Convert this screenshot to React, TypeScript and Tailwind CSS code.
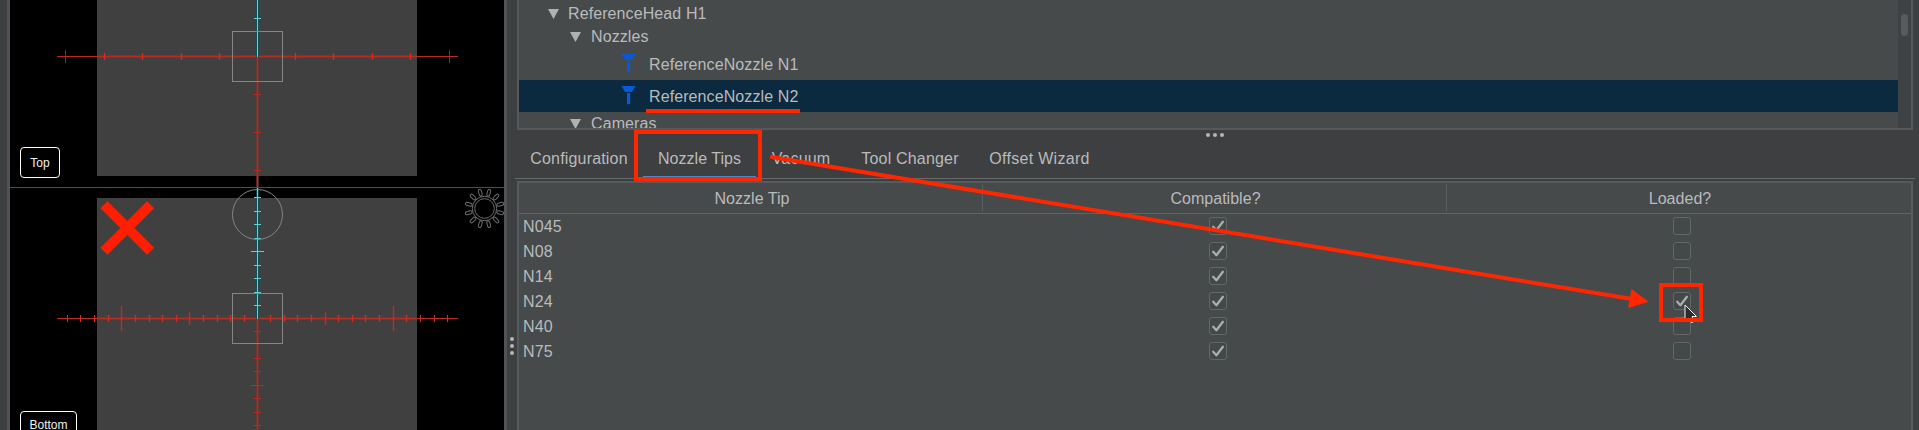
import type { ReactNode } from "react";

const RED = "#b92a20";
const BRIGHT_RED = "#de2a1c";
const CYAN = "#62cfda";

type Tick = { at: number; half: number };

const small = (positions: number[]): Tick[] => positions.map((at) => ({ at, half: 3 }));

function HorizontalAxis({ y, ticks }: { y: number; ticks: Tick[] }) {
  return (
    <g>
      <rect x={97} y={y - 1} width={320} height={3} fill="#c4271c" opacity={0.42} />
      <rect x={57} y={y} width={401} height={1} fill={RED} />
      {ticks.map((t) => (
        <g key={t.at}>
          <rect x={t.at - 1} y={y - t.half} width={3} height={t.half * 2 + 1} fill="#c4271c" opacity={t.at > 97 && t.at < 417 ? 0.2 : 0} />
          <rect x={t.at} y={y - t.half} width={1} height={t.half * 2 + 1} fill={BRIGHT_RED} opacity={t.half > 3 ? 0.75 : 1} />
        </g>
      ))}
    </g>
  );
}

function VerticalAxis({ from, to, color, glow, ticks }: { from: number; to: number; color: string; glow: string; ticks: Tick[] }) {
  return (
    <g>
      <rect x={256} y={from} width={3} height={to - from} fill={glow} opacity={0.7} />
      <rect x={257} y={from} width={1} height={to - from} fill={color} />
      {ticks.map((t) => (
        <rect key={t.at} x={257 - t.half} y={t.at} width={t.half * 2 + 1} height={1} fill={color} />
      ))}
    </g>
  );
}

function Sun() {
  return (
    <g fill="none" stroke="#6c6c6c" strokeWidth={1}>
      <circle cx={484.5} cy={208.5} r={12.2} />
      <circle cx={484.5} cy={208.5} r={9.8} />
      {Array.from({ length: 12 }, (_, i) => (
        <rect key={i} x={483} y={188.8} width={3} height={6.8} rx={1.5} transform={`rotate(${15 + i * 30} 484.5 208.5)`} />
      ))}
    </g>
  );
}

function CameraLabel({ className, children }: { className: string; children: ReactNode }) {
  return (
    <span
      className={`box-border flex shrink-0 items-center justify-center rounded-[4px] border border-white bg-black text-[12px] leading-[12px] text-[#f2f2f2] ${className}`}
    >
      {children}
    </span>
  );
}

function TopCamera() {
  return (
    <div className="relative flex h-[187px] shrink-0 items-end overflow-hidden bg-black pb-[9px] pl-[10px]">
      <svg className="absolute top-0 left-0" width={494} height={187} viewBox="10 0 494 187" shapeRendering="crispEdges">
        <rect x={97} y={0} width={320} height={176} fill="#404040" />
        <HorizontalAxis y={56} ticks={[{ at: 65, half: 6 }, ...small([104, 142, 181, 219, 295, 333, 372, 410]), { at: 449, half: 6 }]} />
        <VerticalAxis from={57} to={187} color={RED} glow="#82302a" ticks={small([94, 132, 170])} />
        <VerticalAxis from={0} to={57} color={CYAN} glow="#005a60" ticks={small([18])} />
        <rect x={232.5} y={31.5} width={50} height={50} fill="none" stroke="#858585" />
      </svg>
      <div className="relative flex">
        <CameraLabel className="h-[31px] w-[40px] pt-px">Top</CameraLabel>
      </div>
    </div>
  );
}

function BottomCamera() {
  return (
    <div className="relative flex flex-1 items-start overflow-hidden border-t border-[#4d4d4d] bg-black pt-[223px] pl-[10px]">
      <svg className="absolute top-0 left-0" width={494} height={242} viewBox="10 188 494 242">
        <g shapeRendering="crispEdges">
          <rect x={97} y={198} width={320} height={232} fill="#404040" />
          <HorizontalAxis
            y={318}
            ticks={[
              ...small([67, 80, 94, 108, 135, 149, 162, 176, 203, 217, 230, 244, 270, 284, 297, 311, 338, 352, 365, 379, 406, 420, 434, 447]),
              { at: 121, half: 12 },
              { at: 189, half: 6 },
              { at: 325, half: 6 },
              { at: 393, half: 12 },
            ]}
          />
          <VerticalAxis from={319} to={430} color={RED} glow="#82302a" ticks={[...small([331, 343, 358, 371, 398, 412, 425]), { at: 385, half: 6 }]} />
          <VerticalAxis from={188} to={319} color={CYAN} glow="#005a60" ticks={[...small([197, 211, 224, 238, 265, 278, 292, 305]), { at: 251, half: 6 }]} />
          <rect x={232.5} y={293.5} width={50} height={50} fill="none" stroke="#858585" />
        </g>
        <circle cx={257.5} cy={214.5} r={25} fill="none" stroke="#858585" />
        <path d="M104 204.7 150.6 251.3M150.6 204.7 104 251.3" stroke="#ff1e00" strokeWidth={10} />
        <Sun />
      </svg>
      <div className="relative flex">
        <CameraLabel className="h-[28px] w-[57px]">Bottom</CameraLabel>
      </div>
    </div>
  );
}

function Disclosure() {
  return (
    <svg className="shrink-0" width={11} height={10} viewBox="0 0 11 10">
      <path d="M0 0H11L5.5 10Z" fill="#afb1b3" />
    </svg>
  );
}

function NozzleIcon() {
  return (
    <svg className="shrink-0" width={15} height={20} viewBox="0 0 15 20">
      <path d="M0.3 -0.3H14.7L11 6H4Z" fill="#0b58d6" />
      <rect x={6} y={7} width={3.2} height={11.2} fill="#0b58d6" />
    </svg>
  );
}

function GroupRow({ className, children }: { className: string; children: ReactNode }) {
  return (
    <div className={`flex h-[23px] shrink-0 items-center ${className}`}>
      <Disclosure />
      <span>{children}</span>
    </div>
  );
}

function NozzleRow({ selected = false, children }: { selected?: boolean; children: ReactNode }) {
  return (
    <div className={`flex h-8 shrink-0 items-center gap-[13px] pl-[102px] ${selected ? "bg-[#0b2a40]" : ""}`}>
      <NozzleIcon />
      <span className="h-[20px] pt-px">{children}</span>
    </div>
  );
}

function Tree() {
  return (
    <div className="mr-[6px] ml-[2px] flex h-[130px] shrink-0 overflow-hidden border-x-2 border-b-2 border-[#56595b] bg-[#464a4b] tracking-[0.1px]">
      <div className="flex h-full flex-1 flex-col overflow-hidden pt-[2px]">
        <GroupRow className="gap-[9px] pl-[29px]">ReferenceHead H1</GroupRow>
        <GroupRow className="gap-[10px] pl-[51px]">Nozzles</GroupRow>
        <NozzleRow>ReferenceNozzle N1</NozzleRow>
        <NozzleRow selected>ReferenceNozzle N2</NozzleRow>
        <GroupRow className="gap-[10px] pl-[51px]">Cameras</GroupRow>
      </div>
      <div className="flex w-[13px] justify-center bg-[#3e4244] pt-[14px]">
        <div className="h-[22px] w-[7px] rounded-full bg-[#585b5e]" />
      </div>
    </div>
  );
}

function Dots({ vertical = false }: { vertical?: boolean }) {
  return (
    <div className={`flex gap-[3px] ${vertical ? "flex-col" : ""}`}>
      <i className="size-1 rounded-full bg-[#b4b6b8]" />
      <i className="size-1 rounded-full bg-[#b4b6b8]" />
      <i className="size-1 rounded-full bg-[#b4b6b8]" />
    </div>
  );
}

function Tabs() {
  return (
    <div className="mr-[4px] flex h-[39px] shrink-0 border-b border-[#666a6b] text-center leading-[37px]">
      <div className="w-[128px] tracking-[0.18px]">Configuration</div>
      <div className="w-[113px] border-b-2 border-[#4a88c7] tracking-[0.05px]">Nozzle Tips</div>
      <div className="w-[90px] tracking-[0.18px]">Vacuum</div>
      <div className="w-[128px] tracking-[0.18px]">Tool Changer</div>
      <div className="w-[131px] tracking-[0.3px]">Offset Wizard</div>
    </div>
  );
}

function CheckBox({ checked }: { checked: boolean }) {
  return (
    <div className="flex size-[18px] items-center justify-center rounded-[3px] border border-[#646769] bg-[#434849]">
      {checked && (
        <svg width={16} height={16} viewBox="0 0 16 16">
          <path d="M3.2 8.8 6.4 12.2 12.9 3.8" fill="none" stroke="#abadaf" strokeWidth={2.3} strokeLinecap="round" strokeLinejoin="round" />
        </svg>
      )}
    </div>
  );
}

const tips = [
  { name: "N045", loaded: false },
  { name: "N08", loaded: false },
  { name: "N14", loaded: false },
  { name: "N24", loaded: true },
  { name: "N40", loaded: false },
  { name: "N75", loaded: false },
];

function TipTable() {
  return (
    <div className="mt-[2px] mr-[6px] ml-[2px] flex flex-1 flex-col border-x-2 border-t-2 border-[#565b5e] bg-[#464a4b]">
      <div className="grid h-[31px] shrink-0 grid-cols-[464px_464px_464px] border-b border-[#606466] pt-px pb-[2px] text-center leading-[29px] tracking-[0.03px]">
        <div className="h-[27px] border-r border-[#5d6062] pl-[3px]">Nozzle Tip</div>
        <div className="h-[27px] border-r border-[#5d6062] pl-[2px]">Compatible?</div>
        <div className="h-[27px] pl-[2px]">Loaded?</div>
      </div>
      {tips.map((tip) => (
        <div key={tip.name} className="grid h-[25px] shrink-0 grid-cols-[464px_464px_464px] items-start pt-[3px]">
          <div className="pl-[4px] tracking-[0.15px]">{tip.name}</div>
          <div className="flex pl-[226px]">
            <CheckBox checked />
          </div>
          <div className="flex pl-[226px]">
            <CheckBox checked={tip.loaded} />
          </div>
        </div>
      ))}
    </div>
  );
}

function Annotations() {
  return (
    <>
      <svg className="absolute top-[304px] left-[1684px]" width={15} height={20} viewBox="0 0 15 20">
        <path d="M1 1V17.5L5 14 7 18.5 9.5 17.8 8 12.5H12.5Z" fill="#2b2b2d" stroke="#f1f1f1" strokeWidth={1} />
      </svg>
      <div className="absolute top-[109px] left-[646px] h-[4px] w-[154px] bg-[#ff2600]" />
      <div className="absolute top-[130px] left-[634px] h-[51px] w-[128px] border-4 border-[#ff2600]" />
      <div className="absolute top-[283px] left-[1659px] h-[39px] w-[44px] border-4 border-[#ff2600]" />
      <svg className="absolute top-[150px] left-[765px]" width={890} height={165} viewBox="765 150 890 165">
        <path d="M770 156.7 1632 299" stroke="#ff2600" strokeWidth={4} />
        <path d="M1631.5 289 1648.7 301.7 1628 308.3Z" fill="#ff2600" />
      </svg>
    </>
  );
}

export default function App() {
  return (
    <div className="relative flex h-[430px] w-[1919px] overflow-hidden bg-[#3e3f41] font-['Liberation_Sans',Arial,sans-serif] text-[16px] leading-[19px] text-[#b9bbbc]">
      <div className="flex w-[500px] shrink-0 flex-col pl-[7px]">
        <div className="flex h-full w-[500px] border-x-[3px] border-[#515254]">
          <div className="flex w-[494px] shrink-0 flex-col">
            <TopCamera />
            <BottomCamera />
          </div>
        </div>
      </div>
      <div className="ml-[7px] flex w-[8px] shrink-0 items-start justify-end pt-[337px] pr-px">
        <Dots vertical />
      </div>
      <div className="flex flex-1 flex-col">
        <Tree />
        <div className="flex h-[10px] shrink-0 justify-center pt-[3px] pr-[4px]">
          <Dots />
        </div>
        <Tabs />
        <TipTable />
      </div>
      <Annotations />
    </div>
  );
}
